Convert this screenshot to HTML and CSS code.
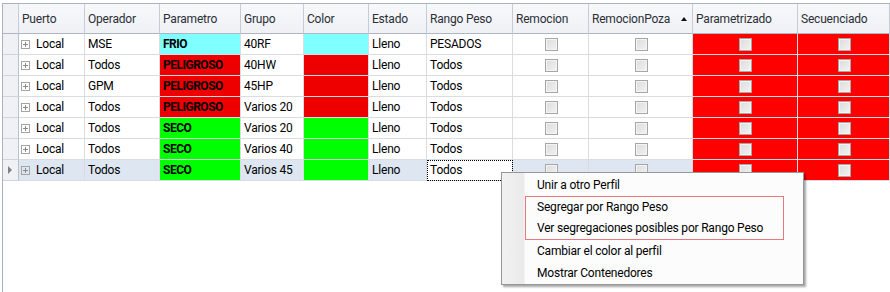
FILE: index.html
```html
<!DOCTYPE html>
<html lang="es">
<head>
<meta charset="utf-8">
<title>Perfiles</title>
<link rel="stylesheet" href="styles.css">
</head>
<body>
<div class="grid">
  <div class="row head">
    <div class="rh"></div>
    <div class="hc">Puerto</div>
    <div class="hc">Operador</div>
    <div class="hc">Parametro</div>
    <div class="hc">Grupo</div>
    <div class="hc">Color</div>
    <div class="hc">Estado</div>
    <div class="hc">Rango Peso</div>
    <div class="hc">Remocion</div>
    <div class="hc sorted">RemocionPoza<span class="sort"></span></div>
    <div class="hc">Parametrizado</div>
    <div class="hc">Secuenciado</div>
  </div>

  <div class="row">
    <div class="rh"></div>
    <div class="c"><span class="exp"></span>Local</div>
    <div class="c">MSE</div>
    <div class="c b cyan">FRIO</div>
    <div class="c">40RF</div>
    <div class="c cyan"></div>
    <div class="c">Lleno</div>
    <div class="c">PESADOS</div>
    <div class="c ck"><span class="box"></span></div>
    <div class="c ck"><span class="box"></span></div>
    <div class="c ck red2"><span class="box"></span></div>
    <div class="c ck red2"><span class="box"></span></div>
  </div>

  <div class="row">
    <div class="rh"></div>
    <div class="c"><span class="exp"></span>Local</div>
    <div class="c">Todos</div>
    <div class="c b red">PELIGROSO</div>
    <div class="c">40HW</div>
    <div class="c red"></div>
    <div class="c">Lleno</div>
    <div class="c">Todos</div>
    <div class="c ck"><span class="box"></span></div>
    <div class="c ck"><span class="box"></span></div>
    <div class="c ck red2"><span class="box"></span></div>
    <div class="c ck red2"><span class="box"></span></div>
  </div>

  <div class="row">
    <div class="rh"></div>
    <div class="c"><span class="exp"></span>Local</div>
    <div class="c">GPM</div>
    <div class="c b red">PELIGROSO</div>
    <div class="c">45HP</div>
    <div class="c red"></div>
    <div class="c">Lleno</div>
    <div class="c">Todos</div>
    <div class="c ck"><span class="box"></span></div>
    <div class="c ck"><span class="box"></span></div>
    <div class="c ck red2"><span class="box"></span></div>
    <div class="c ck red2"><span class="box"></span></div>
  </div>

  <div class="row">
    <div class="rh"></div>
    <div class="c"><span class="exp"></span>Local</div>
    <div class="c">Todos</div>
    <div class="c b red">PELIGROSO</div>
    <div class="c">Varios 20</div>
    <div class="c red"></div>
    <div class="c">Lleno</div>
    <div class="c">Todos</div>
    <div class="c ck"><span class="box"></span></div>
    <div class="c ck"><span class="box"></span></div>
    <div class="c ck red2"><span class="box"></span></div>
    <div class="c ck red2"><span class="box"></span></div>
  </div>

  <div class="row">
    <div class="rh"></div>
    <div class="c"><span class="exp"></span>Local</div>
    <div class="c">Todos</div>
    <div class="c b green">SECO</div>
    <div class="c">Varios 20</div>
    <div class="c green"></div>
    <div class="c">Lleno</div>
    <div class="c">Todos</div>
    <div class="c ck"><span class="box"></span></div>
    <div class="c ck"><span class="box"></span></div>
    <div class="c ck red2"><span class="box"></span></div>
    <div class="c ck red2"><span class="box"></span></div>
  </div>

  <div class="row">
    <div class="rh"></div>
    <div class="c"><span class="exp"></span>Local</div>
    <div class="c">Todos</div>
    <div class="c b green">SECO</div>
    <div class="c">Varios 40</div>
    <div class="c green"></div>
    <div class="c">Lleno</div>
    <div class="c">Todos</div>
    <div class="c ck"><span class="box"></span></div>
    <div class="c ck"><span class="box"></span></div>
    <div class="c ck red2"><span class="box"></span></div>
    <div class="c ck red2"><span class="box"></span></div>
  </div>

  <div class="row sel">
    <div class="rh"><span class="cur"></span></div>
    <div class="c"><span class="exp"></span>Local</div>
    <div class="c">Todos</div>
    <div class="c b green">SECO</div>
    <div class="c">Varios 45</div>
    <div class="c green"></div>
    <div class="c">Lleno</div>
    <div class="c focus">Todos</div>
    <div class="c ck"><span class="box"></span></div>
    <div class="c ck"><span class="box"></span></div>
    <div class="c ck red2"><span class="box"></span></div>
    <div class="c ck red2"><span class="box"></span></div>
  </div>
</div>

<div class="menu">
  <div class="item">Unir a otro Perfil</div>
  <div class="group">
    <div class="item">Segregar por Rango Peso</div>
    <div class="item">Ver segregaciones posibles por Rango Peso</div>
  </div>
  <div class="item">Cambiar el color al perfil</div>
  <div class="item">Mostrar Contenedores</div>
</div>
</body>
</html>
```

FILE: styles.css
```css
html, body {
  margin: 0;
  padding: 0;
  background: #ffffff;
}

body {
  width: 890px;
  height: 292px;
  overflow: hidden;
  padding: 3px 0 0 2px;
  box-sizing: border-box;
  font-family: Roboto, "Open Sans", sans-serif;
  font-size: 12px;
  letter-spacing: -0.2px;
  color: #000;
  position: relative;
}

.grid {
  width: 888px;
  height: 289px;
  border-left: 1px solid #a9b2c2;
  border-top: 1px solid #a9b2c2;
  box-sizing: border-box;
  background: #fff;
}

.row {
  display: grid;
  grid-template-columns: 16px 66px 75px 81px 63px 65px 58px 86px 76px 104px 105px 92px;
  height: 21px;
}

.row > div {
  box-sizing: border-box;
  border-right: 1px solid #d9dde3;
  border-bottom: 1px solid #d9dde3;
  display: flex;
  align-items: center;
  white-space: nowrap;
  overflow: hidden;
}

.row.head {
  height: 30px;
  background: linear-gradient(#f7f8fa, #eef1f5);
}

.row.head > div {
  border-right-color: #c6ccd6;
  border-bottom-color: #aeb6c3;
  color: #2b2f36;
}

.hc {
  padding-left: 3px;
  padding-top: 1px;
}

.hc.sorted {
  justify-content: space-between;
  padding-right: 5px;
}

.sort {
  width: 0;
  height: 0;
  border-left: 3.5px solid transparent;
  border-right: 3.5px solid transparent;
  border-bottom: 4px solid #111;
  margin-top: -1px;
}

.rh {
  background: #eff1f5;
}

.row > .rh {
  border-right-color: #b9c1cd;
  border-bottom-color: #cfd4dc;
}

.c {
  padding-left: 3px;
}

.exp {
  width: 9px;
  height: 9px;
  box-sizing: border-box;
  border: 1px solid #a4a4a4;
  margin: 0 6px 0 -1px;
  position: relative;
  flex: none;
}

.exp::before,
.exp::after {
  content: "";
  position: absolute;
  background: #8a8a8a;
}

.exp::before {
  left: 1px;
  right: 1px;
  top: 3px;
  height: 1px;
}

.exp::after {
  top: 1px;
  bottom: 1px;
  left: 3px;
  width: 1px;
}

.b {
  font-weight: 700;
  letter-spacing: -0.5px;
}

.cyan { background: #7fffff; }
.red { background: #ee0000; }
.red2 { background: #ff0000; }
.green { background: #00ff00; }

.ck {
  justify-content: center;
  padding-left: 0;
}

.box {
  width: 13px;
  height: 13px;
  box-sizing: border-box;
  border: 1px solid #a6a6a6;
  background: linear-gradient(135deg, #dcdcdc, #f2f2f2);
  box-shadow: inset 0 0 0 1px #f4f4f4;
  margin-left: 1px;
}

.sel > div {
  background: #dde6f1;
}

.sel > .rh {
  background: #eff1f5;
}

.sel > .red2 { background: #ff0000; }
.sel > .green { background: #00ff00; }

.sel > .focus {
  background: #fff;
  outline: 1px dotted #000;
  outline-offset: -1px;
}

.cur {
  width: 0;
  height: 0;
  border-top: 4px solid transparent;
  border-bottom: 4px solid transparent;
  border-left: 4px solid #808080;
  margin-left: 5px;
}

.menu {
  position: absolute;
  left: 501px;
  top: 172px;
  width: 303px;
  height: 113px;
  box-sizing: border-box;
  border: 1px solid #979797;
  padding-top: 1px;
  background: linear-gradient(to right, #f1f1f1 0, #eaeaea 22px, #fcfcfc 23px, #fcfcfc 100%);
  box-shadow: 2px 2px 2px rgba(0, 0, 0, 0.35);
}

.item {
  height: 22px;
  line-height: 22px;
  padding-left: 35px;
  white-space: nowrap;
  color: #000;
}

.group {
  margin-left: 23px;
  width: 259px;
  border: 1px solid #e67880;
  box-sizing: border-box;
}

.group .item {
  height: 21px;
  line-height: 21px;
  padding-left: 11px;
}
```
